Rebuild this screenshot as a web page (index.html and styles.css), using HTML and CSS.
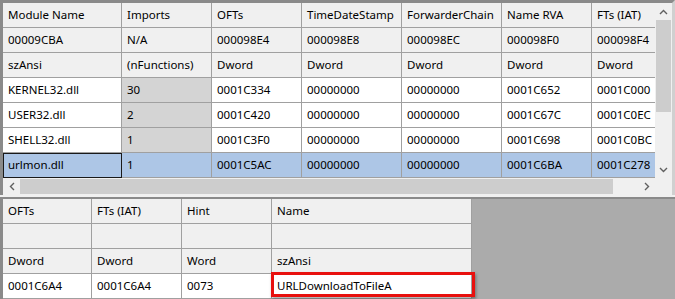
FILE: index.html
```html
<!DOCTYPE html>
<html lang="en">
<head>
    <meta charset="UTF-8">
    <title>Import Directory</title>
    <link rel="stylesheet" href="styles.css">
</head>
<body>
    <div class="pane top">
        <div class="top-body">
            <div class="grid top-grid">
                <div class="cell head">Module Name</div>
                <div class="cell head">Imports</div>
                <div class="cell head">OFTs</div>
                <div class="cell head">TimeDateStamp</div>
                <div class="cell head">ForwarderChain</div>
                <div class="cell head">Name RVA</div>
                <div class="cell head">FTs (IAT)</div>

                <div class="cell head">00009CBA</div>
                <div class="cell head">N/A</div>
                <div class="cell head">000098E4</div>
                <div class="cell head">000098E8</div>
                <div class="cell head">000098EC</div>
                <div class="cell head">000098F0</div>
                <div class="cell head">000098F4</div>

                <div class="cell head">szAnsi</div>
                <div class="cell head">(nFunctions)</div>
                <div class="cell head">Dword</div>
                <div class="cell head">Dword</div>
                <div class="cell head">Dword</div>
                <div class="cell head">Dword</div>
                <div class="cell head">Dword</div>

                <div class="cell">KERNEL32.dll</div>
                <div class="cell count">30</div>
                <div class="cell">0001C334</div>
                <div class="cell">00000000</div>
                <div class="cell">00000000</div>
                <div class="cell">0001C652</div>
                <div class="cell">0001C000</div>

                <div class="cell">USER32.dll</div>
                <div class="cell count">2</div>
                <div class="cell">0001C420</div>
                <div class="cell">00000000</div>
                <div class="cell">00000000</div>
                <div class="cell">0001C67C</div>
                <div class="cell">0001C0EC</div>

                <div class="cell">SHELL32.dll</div>
                <div class="cell count">1</div>
                <div class="cell">0001C3F0</div>
                <div class="cell">00000000</div>
                <div class="cell">00000000</div>
                <div class="cell">0001C698</div>
                <div class="cell">0001C0BC</div>

                <div class="cell sel focus">urlmon.dll</div>
                <div class="cell sel">1</div>
                <div class="cell sel">0001C5AC</div>
                <div class="cell sel">00000000</div>
                <div class="cell sel">00000000</div>
                <div class="cell sel">0001C6BA</div>
                <div class="cell sel">0001C278</div>
            </div>
            <div class="vscroll">
                <div class="arrow">
                    <svg width="9" height="6" viewBox="0 0 9 6"><path d="M1 5 L4.5 1.5 L8 5" fill="none" stroke="#606060" stroke-width="1.4"/></svg>
                </div>
                <div class="vthumb"></div>
                <div class="vtrack"></div>
                <div class="arrow">
                    <svg width="9" height="6" viewBox="0 0 9 6"><path d="M1 1 L4.5 4.5 L8 1" fill="none" stroke="#606060" stroke-width="1.4"/></svg>
                </div>
            </div>
        </div>
        <div class="hscroll">
            <div class="arrow">
                <svg width="6" height="9" viewBox="0 0 6 9"><path d="M5 1 L1.5 4.5 L5 8" fill="none" stroke="#606060" stroke-width="1.4"/></svg>
            </div>
            <div class="hthumb"></div>
            <div class="htrack"></div>
            <div class="arrow">
                <svg width="6" height="9" viewBox="0 0 6 9"><path d="M1 1 L4.5 4.5 L1 8" fill="none" stroke="#606060" stroke-width="1.4"/></svg>
            </div>
            <div class="corner"></div>
        </div>
    </div>

    <div class="splitter"></div>

    <div class="pane bottom">
        <div class="grid bottom-grid">
            <div class="cell head">OFTs</div>
            <div class="cell head">FTs (IAT)</div>
            <div class="cell head">Hint</div>
            <div class="cell head">Name</div>

            <div class="cell head"></div>
            <div class="cell head"></div>
            <div class="cell head"></div>
            <div class="cell head"></div>

            <div class="cell head">Dword</div>
            <div class="cell head">Dword</div>
            <div class="cell head">Word</div>
            <div class="cell head">szAnsi</div>

            <div class="cell">0001C6A4</div>
            <div class="cell">0001C6A4</div>
            <div class="cell">0073</div>
            <div class="cell marked">URLDownloadToFileA</div>
        </div>
        <div class="empty"></div>
    </div>
</body>
</html>
```

FILE: styles.css
```css
body {
    margin: 0;
    width: 675px;
    height: 299px;
    overflow: hidden;
    background-color: #f0f0f0;
    font-family: "Noto Sans", "Open Sans", sans-serif;
    font-size: 11.5px;
    color: #000;
}

.pane {
    border-left: 3px solid #8a8a8a;
    border-top: 3px solid #8a8a8a;
    border-right: 3px solid #d0d0d0;
}

.top-body {
    display: flex;
    height: 175px;
}

.grid {
    display: grid;
    grid-auto-rows: 25px;
    overflow: hidden;
}

.top-grid {
    width: 652px;
    grid-template-columns: 119px 90px 90px 100px 100px 90px 90px;
}

.cell {
    box-sizing: border-box;
    border-right: 1px solid #a0a0a0;
    border-bottom: 1px solid #a0a0a0;
    padding-left: 5px;
    line-height: 24px;
    white-space: nowrap;
    background-color: #fff;
}

.cell.head {
    background-color: #f0f0f0;
}

.cell.count {
    background-color: #d4d4d4;
}

.cell.sel {
    background-color: #adc6e6;
}

.cell.focus {
    border: 1px solid #1a1a1a;
    padding-left: 4px;
    line-height: 22px;
}

.vscroll {
    width: 17px;
    display: flex;
    flex-direction: column;
    background-color: #f0f0f0;
}

.arrow {
    width: 17px;
    height: 17px;
    display: flex;
    align-items: center;
    justify-content: center;
    flex-shrink: 0;
}

.vthumb {
    height: 92px;
    margin: 0 1px;
    background-color: #cdcdcd;
}

.vtrack {
    flex: 1;
}

.hscroll {
    display: flex;
    height: 17px;
    background-color: #f0f0f0;
}

.hthumb {
    width: 593px;
    margin: 1px 0;
    background-color: #cdcdcd;
}

.htrack {
    flex: 1;
}

.corner {
    width: 17px;
}

.splitter {
    height: 2px;
}

.bottom {
    display: flex;
    height: 104px;
    border-right: none;
    border-top-width: 2px;
}

.bottom-grid {
    grid-template-columns: 89px 90px 90px 200px;
    overflow: visible;
    position: relative;
    z-index: 1;
}

.cell.marked {
    position: relative;
}

.cell.marked::after {
    content: "";
    position: absolute;
    left: -1px;
    top: -2px;
    right: -4px;
    bottom: 1px;
    border: 3px solid #e8100e;
    box-shadow: 1px 2px 3px rgba(0, 0, 0, 0.35);
}

.empty {
    flex: 1;
    background-color: #ababab;
}
```
